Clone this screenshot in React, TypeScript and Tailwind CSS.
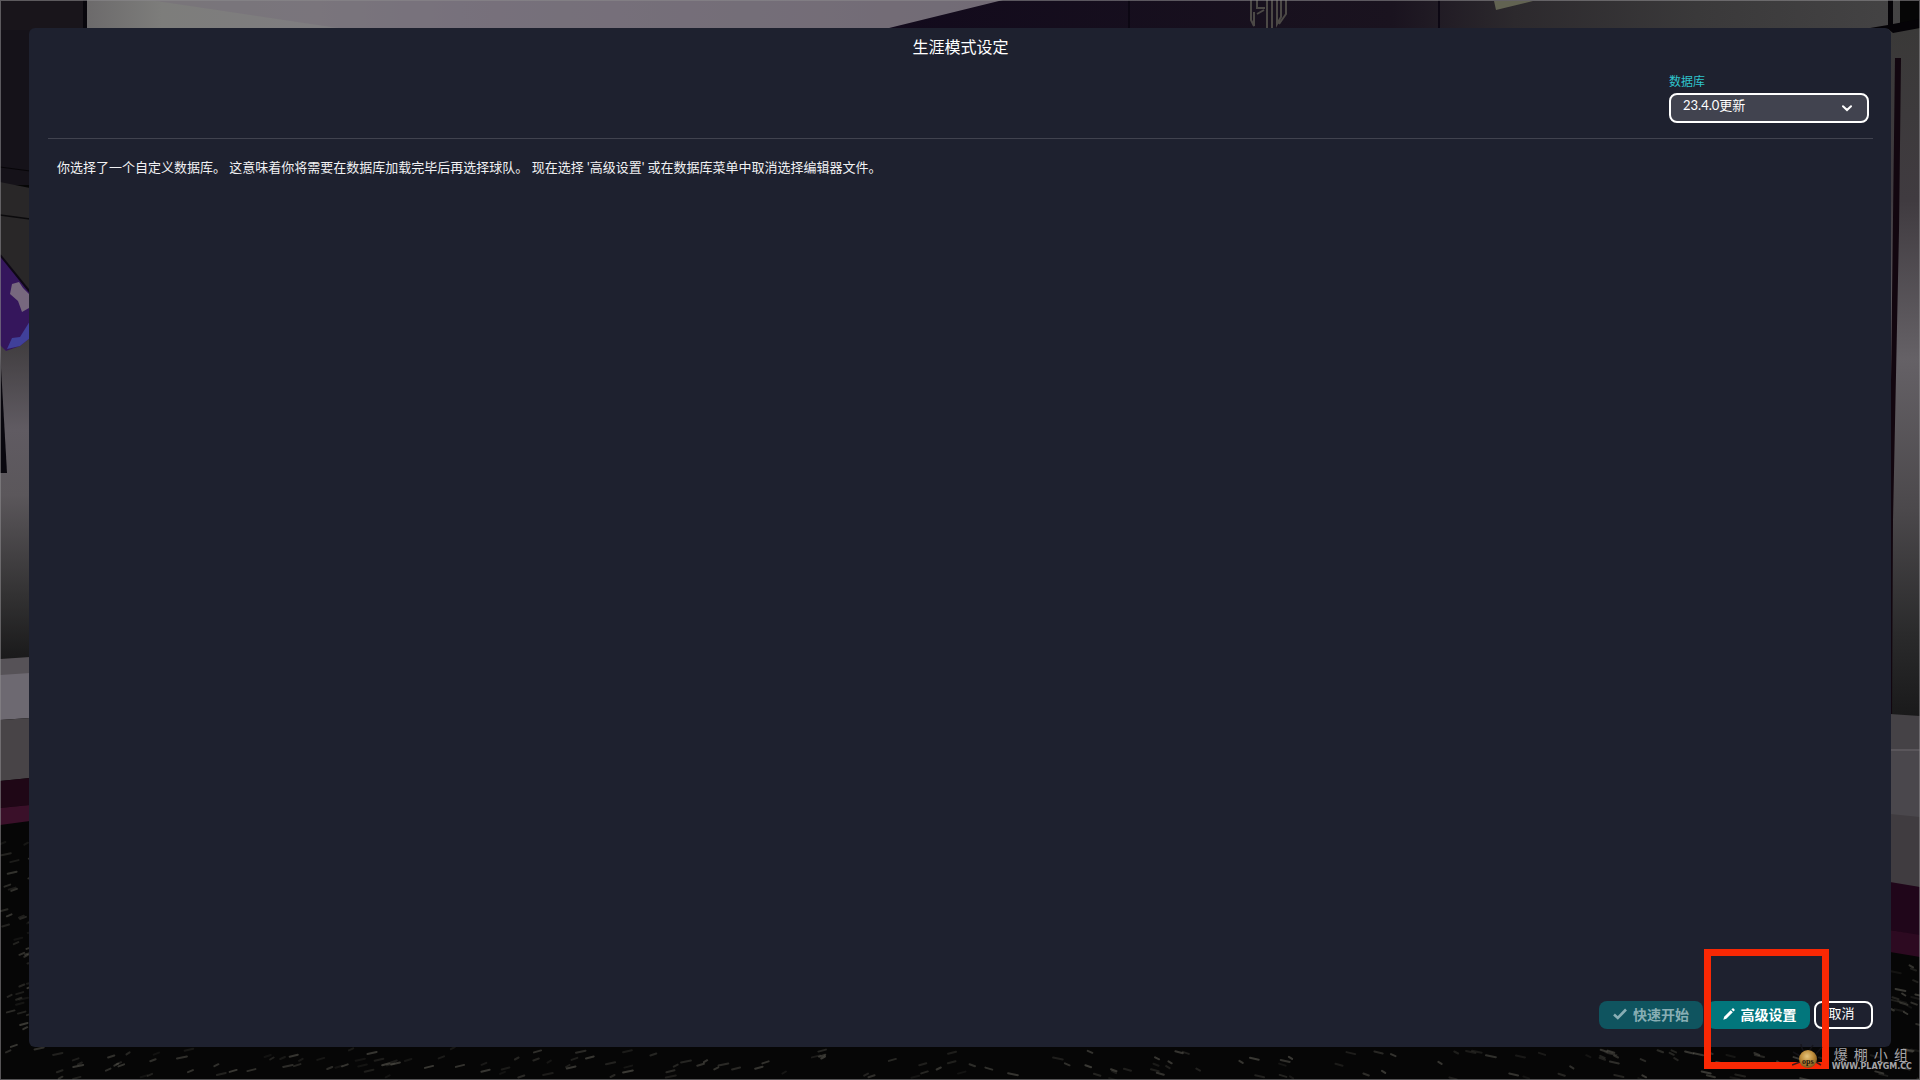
import React from "react";

const CJK = "font-['Noto_Sans_CJK_SC',sans-serif]";
const LATIN_CJK = "font-['Lato','Noto_Sans_CJK_SC',sans-serif]";

function makeFlecks(seed: number, count: number, x0: number, x1: number, y0: number, y1: number) {
  let s = seed;
  const next = () => {
    s = (s * 16807) % 2147483647;
    return s / 2147483647;
  };
  return Array.from({ length: count }, () => ({
    x: x0 + next() * (x1 - x0),
    y: y0 + next() * (y1 - y0),
    w: 3 + next() * 7,
    o: 0.12 + next() * 0.4,
  }));
}

const FLECKS = [
  ...makeFlecks(71, 42, 0, 30, 840, 1050),
  ...makeFlecks(90733, 190, 0, 1920, 1049, 1079),
  ...makeFlecks(331, 20, 1890, 1920, 960, 1050),
];

function Backdrop() {
  return (
    <svg
      className="absolute inset-0 h-full w-full"
      viewBox="0 0 1920 1080"
      preserveAspectRatio="none"
      aria-hidden="true"
    >
      <defs>
        <linearGradient id="ceiling" x1="0" x2="1" y1="0" y2="0">
          <stop offset="0" stopColor="#6c6a6b" />
          <stop offset="0.08" stopColor="#7d7d7b" />
          <stop offset="0.25" stopColor="#7f7d80" />
          <stop offset="0.4" stopColor="#79737f" />
          <stop offset="1" stopColor="#6b646e" />
        </linearGradient>
        <linearGradient id="leftWall" x1="0" x2="0" y1="0" y2="1">
          <stop offset="0" stopColor="#3c393b" />
          <stop offset="0.3" stopColor="#605b62" />
          <stop offset="0.5" stopColor="#5b575b" />
          <stop offset="0.8" stopColor="#333233" />
          <stop offset="1" stopColor="#19191a" />
        </linearGradient>
        <linearGradient id="rightWall" x1="0" x2="0" y1="0" y2="1">
          <stop offset="0" stopColor="#3a3938" />
          <stop offset="0.25" stopColor="#403b40" />
          <stop offset="0.48" stopColor="#656166" />
          <stop offset="0.7" stopColor="#4b484b" />
          <stop offset="0.88" stopColor="#2a2a2b" />
          <stop offset="1" stopColor="#19191a" />
        </linearGradient>
        <linearGradient id="topRight" x1="0" x2="1" y1="0" y2="0">
          <stop offset="0" stopColor="#120a1c" />
          <stop offset="0.5" stopColor="#1a131f" />
          <stop offset="0.62" stopColor="#2c292d" />
          <stop offset="0.8" stopColor="#3a393a" />
          <stop offset="1" stopColor="#444344" />
        </linearGradient>
      </defs>

      <rect width="1920" height="1080" fill="#060606" />

      {/* ceiling */}
      <rect width="84" height="120" fill="#19151b" />
      <rect x="83" width="4" height="30" fill="#08060c" />
      <rect x="87" width="930" height="40" fill="url(#ceiling)" />
      <path d="M150 0 H1003 L960 12 L885 30 H352 Z" fill="#766f7a" opacity="0.6" />
      <path d="M885 29 L1003 0 H1900 V40 H885 Z" fill="url(#topRight)" />
      <path d="M1129 0 V28 M1439 0 V28" stroke="#0c0713" strokeWidth="2" />
      <path d="M1494 1 H1533 L1496 10 Z" fill="#626352" />
      <path
        d="M1251 0 V20 L1254 26 V12 M1257 0 V8 H1265 M1257 14 L1264 10 M1267 0 V28 M1272 0 V28 M1277 0 V24 L1281 17 V0 M1286 0 V14 L1279 24"
        fill="none"
        stroke="#4c4946"
        strokeWidth="2"
      />

      {/* left wall */}
      <rect y="30" width="30" height="155" fill="#151219" />
      <path d="M0 167 L30 171" stroke="#070508" strokeWidth="1" />
      <path d="M0 182 L30 188 V350 H0 Z" fill="#292728" />
      <path d="M0 215 L30 219" stroke="#0b0a0c" strokeWidth="1.5" />
      <rect y="330" width="30" height="330" fill="url(#leftWall)" />
      <path d="M0 255 L30 292 V338 L20 346 L6 351 L0 345 Z" fill="#35165c" />
      <path d="M0 255 L30 292" stroke="#0e0815" strokeWidth="2" />
      <path d="M12 284 L19 282 L23 288 L29 294 V308 L22 312 L18 301 L10 294 Z" fill="#77687e" />
      <path d="M7 349 L12 338 L20 337 L30 321 V338 L20 346 Z" fill="#40409a" />
      <path d="M0 350 L4 420 L7 473 H0 Z" fill="#09070e" />
      <path d="M0 659 L30 657 V674 L0 676 Z" fill="#565257" />
      <path d="M0 675 L30 673 V718 L0 720 Z" fill="#6d6971" />
      <path d="M0 720 L30 718 V778 L0 781 Z" fill="#484447" />
      <path d="M0 781 L30 778 V805 L0 808 Z" fill="#1f0716" />
      <path d="M0 808 L30 805 V821 L0 825 Z" fill="#3a1029" />

      {/* right wall */}
      <rect x="1890" y="28" width="30" height="690" fill="url(#rightWall)" />
      <path d="M1870 28 L1888 25 L1888 0 H1893 V24 L1920 19 V28 L1893 33 L1888 29 Z" fill="#050307" />
      <path d="M1895 58 H1901 L1899 230 L1893 520 L1892 714 H1889 L1891 380 Z" fill="#12060f" />
      <path d="M1890 714 L1920 716 V751 H1890 Z" fill="#454246" />
      <rect x="1890" y="749" width="30" height="2" fill="#5a565b" />
      <rect x="1890" y="751" width="30" height="68" fill="#4a474c" />
      <path d="M1890 814 L1920 817 V888 H1890 Z" fill="#403c40" />
      <path d="M1890 882 L1920 887 V936 L1890 930 Z" fill="#20061a" />
      <path d="M1890 930 L1920 935 V957 L1890 952 Z" fill="#2d0a21" />

      {/* carpet flecks */}
      {FLECKS.map((f, i) => (
        <path
          key={i}
          d={`M${f.x.toFixed(1)} ${f.y.toFixed(1)} l${f.w.toFixed(1)} ${f.x > 960 ? 2 : -2}`}
          stroke="#6a685f"
          strokeWidth="2"
          strokeLinecap="round"
          opacity={f.o}
        />
      ))}

      <path d="M0 0.5 H1920 M0.5 0 V1080 M1919.5 0 V1080 M0 1079.5 H1920" stroke="#8b898c" opacity="0.6" />
    </svg>
  );
}

function CheckIcon() {
  return (
    <svg className="h-3 w-[14px]" viewBox="0 0 14 12" fill="none" aria-hidden="true">
      <path d="M1 6.5 L4.8 10 L13 1.5" stroke="currentColor" strokeWidth="2.6" />
    </svg>
  );
}

function PencilIcon() {
  return (
    <svg className="h-3 w-3" viewBox="0 0 12 12" fill="currentColor" aria-hidden="true">
      <path d="M0.3 11.7 L1.2 8.7 L7.7 2.2 L9.8 4.3 L3.3 10.8 Z" />
      <path d="M8.4 1.5 L9.4 0.5 Q10 0 10.6 0.5 L11.5 1.4 Q12 2 11.5 2.6 L10.5 3.6 Z" />
    </svg>
  );
}

function Watermark() {
  return (
    <div className="pointer-events-none absolute right-2 bottom-2 z-20 flex items-end gap-2">
      <svg className="h-7 w-8" viewBox="0 0 32 28" aria-hidden="true">
        <defs>
          <radialGradient id="ball" cx="0.45" cy="0.35" r="0.7">
            <stop offset="0" stopColor="#e6c57c" />
            <stop offset="0.5" stopColor="#bd8c3a" />
            <stop offset="1" stopColor="#6e4813" />
          </radialGradient>
        </defs>
        <path
          d="M12 8 Q9 3 9 0 M17 7 Q20 3 21 1 M8 12 L1 8 M8 18 L0 21 M23 11 L30 3 M24 18 L29 21"
          stroke="#17151a"
          strokeWidth="1.5"
          fill="none"
          opacity="0.8"
        />
        <circle cx="16" cy="15" r="9" fill="url(#ball)" />
        <text x="10" y="20" fontFamily="Liberation Serif, serif" fontWeight="700" fontSize="8" fill="#1c130a">
          ops
        </text>
      </svg>
      <div className="flex flex-col text-[#a5a4a8]">
        <span className={`${CJK} flex justify-between pr-1 pl-0.5 text-sm leading-4`}>
          <span>爆</span>
          <span>棚</span>
          <span>小</span>
          <span>组</span>
        </span>
        <span className="font-['DejaVu_Sans',sans-serif] text-[8px] leading-[10px] font-bold">WWW.PLAYGM.CC</span>
      </div>
    </div>
  );
}

export default function App() {
  return (
    <div className={`relative flex min-h-screen flex-col overflow-hidden bg-black text-white ${CJK}`}>
      <Backdrop />

      <main className="relative mx-[29px] mt-7 mb-[33px] flex grow flex-col rounded-md bg-[#1e212f] pr-[18px] pb-[18px] pl-[19px]">
        <h1 className="pt-1.5 text-center text-base leading-6 font-normal">生涯模式设定</h1>

        <header className="flex justify-end border-b border-[#41434f] pt-[15px] pr-1 pb-[15px]">
          <div className="flex w-[200px] flex-col">
            <label htmlFor="database" className="pb-1 text-xs leading-4 text-[#2fc4cc]">
              数据库
            </label>
            <div className="relative">
              <select
                id="database"
                className={`${LATIN_CJK} block h-[30px] w-full appearance-none rounded-lg border-2 border-white bg-[#41434f] pr-8 pb-1.5 pl-3 text-[13px] leading-5 text-white`}
                defaultValue="23.4.0"
              >
                <option value="23.4.0">23.4.0更新</option>
              </select>
              <svg
                className="pointer-events-none absolute top-3 right-[17px] h-[7px] w-[10px]"
                viewBox="0 0 10 7"
                fill="none"
                aria-hidden="true"
              >
                <path d="M1 1.2 L5 5 L9 1.2" stroke="#fff" strokeWidth="2" strokeLinecap="round" />
              </svg>
            </div>
          </div>
        </header>

        <p className={`${LATIN_CJK} grow px-[9px] pt-[18px] text-[13px] leading-5 text-[#f1f1f3]`}>
          你选择了一个自定义数据库。 这意味着你将需要在数据库加载完毕后再选择球队。 现在选择 '高级设置'
          或在数据库菜单中取消选择编辑器文件。
        </p>

        <footer className="flex justify-end gap-1">
          <button
            type="button"
            disabled
            className="flex h-7 w-[104px] items-center justify-center gap-1.5 rounded-lg bg-[#0f545f] pb-0.5 text-sm leading-5 font-bold text-[#88aeb4]"
          >
            <CheckIcon />
            快速开始
          </button>
          <div className="relative">
            <button
              type="button"
              className="flex h-7 w-[103px] items-center justify-center gap-1.5 rounded-lg bg-[#02767c] pb-0.5 pl-0.5 text-sm leading-5 font-bold text-white"
            >
              <PencilIcon />
              高级设置
            </button>
            <div className="pointer-events-none absolute -top-[52px] -left-[3px] z-10 h-[120px] w-[125px] border-[7px] border-[#f92804]" />
          </div>
          <button
            type="button"
            className="flex h-7 w-[59px] items-center justify-center rounded-lg border-2 border-white pr-1 pb-1 text-[13px] leading-5"
          >
            取消
          </button>
        </footer>
      </main>

      <Watermark />
    </div>
  );
}
